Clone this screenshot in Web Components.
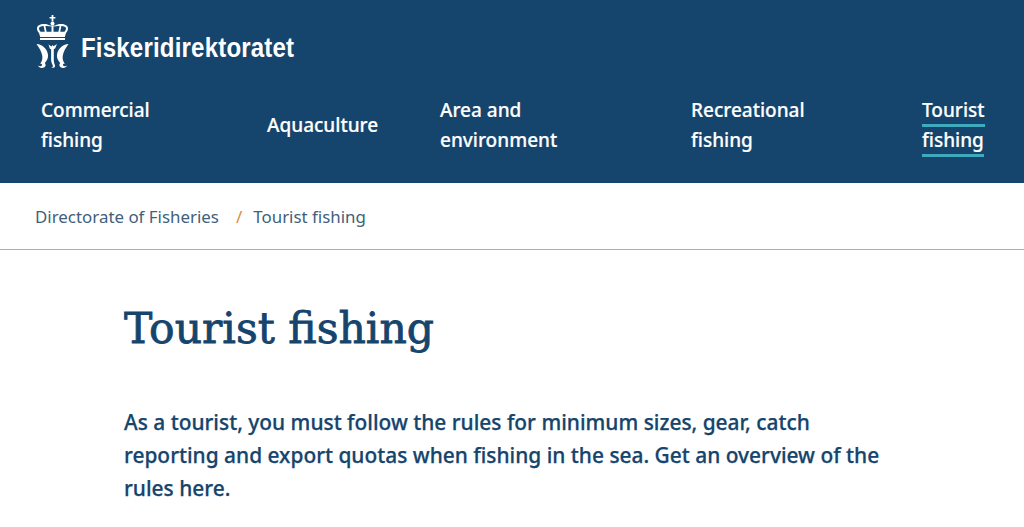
<!DOCTYPE html>
<html lang="en">
<head>
<meta charset="utf-8">
<title>Tourist fishing</title>
<style>
  html, body { margin: 0; height: 527px; overflow: hidden; background: #fff; }
  body { font-family: "Noto Sans", Roboto, sans-serif; color: #15446c; }
</style>
</head>
<body>
<site-header>
  <nav-item>Commercial<br>fishing</nav-item>
  <nav-item>Aquaculture</nav-item>
  <nav-item>Area and<br>environment</nav-item>
  <nav-item>Recreational<br>fishing</nav-item>
  <nav-item active><span>Tourist</span><br><span>fishing</span></nav-item>
</site-header>
<bread-crumbs>
  <span slot="first">Directorate of Fisheries</span>
  <span slot="second">Tourist fishing</span>
</bread-crumbs>
<page-intro heading="Tourist fishing">
  As a tourist, you must follow the rules for minimum sizes, gear, catch reporting and export quotas when fishing in the sea. Get an overview of the rules here.
</page-intro>

<script>
customElements.define(
  'site-logo',
  class extends HTMLElement {
    constructor() {
      super();
      this.attachShadow({ mode: 'open' }).innerHTML = `
        <style>
          :host { display: flex; align-items: flex-start; gap: 12px; color: #fff; height: 53px; }
          svg { display: block; flex: none; }
          .name {
            font: 700 27.500px/1 "Liberation Sans", sans-serif;
            margin-top: 19px;
            letter-spacing: 0.2px;
            transform: scaleX(0.875);
            transform-origin: left center;
            white-space: nowrap;
          }
        </style>
        <svg width="33" height="53" viewBox="0 0 33 53" fill="#fff" aria-hidden="true">
          <path d="M15.600 0h1.800v2h2v1.600h-2v3h-1.800v-3h-2V2h2z"/>
          <circle cx="16.500" cy="8.500" r="2"/>
          <path fill-rule="evenodd" d="M1 13.500c0-3 3-4.600 7-4.600 2.600 0 4.600.6 6 1.600h5c1.400-1 3.400-1.600 6-1.600 4 0 7 1.600 7 4.600 0 1.700-.8 3.200-2 4.500l-1.200 4H4.200L3 18c-1.200-1.300-2-2.800-2-4.500zM3 13.300c0 1.300.7 2.500 1.600 3.500h4.200L7.600 11c-2.700.2-4.600 1-4.600 2.300zM9.400 11.100l1.200 5.700h4.900v-5.200c-1.500-.3-3.500-.6-6.100-.5zM17.500 11.600v5.200h4.900l1.200-5.700c-2.600-.1-4.600.2-6.100.5zM25.400 11l-1.200 5.800h4.200c.9-1 1.600-2.200 1.600-3.500 0-1.300-1.900-2.100-4.600-2.300z"/>
          <rect x="4" y="23" width="25" height="2"/>
          <path d="M0.500 29c6 .4 11 5 11.500 11 .3 3.400-1.300 6-3.200 8 1.300 1.300 1.100 3.300-.8 4.400-2.300 1.100-5.300.3-6-1.900 1.300.9 3.300.9 3.900-.1.600-1.100-.4-2-1.700-1.600 1.800-2.600 2.500-5 2-8.200C5.600 36.800 3.300 33 .5 29z"/>
          <path d="M32.500 29c-6 .4-11 5-11.500 11-.3 3.400 1.300 6 3.200 8-1.300 1.300-1.100 3.300.8 4.400 2.300 1.100 5.300.3 6-1.900-1.300.9-3.300.9-3.900-.1-.6-1.100.4-2 1.700-1.600-1.800-2.600-2.500-5-2-8.200.6-3.800 2.900-7.600 5.700-11.600z"/>
          <path d="M12.500 29.500l3 2 1-1.500 1.100 1.300 3.400-2.300-1.900 4.400-1.300.6v11.500c0 3.200 1.700 4.500 1.100 6.200-.7 1.300-2.800 1.400-4.100.4 1.100.2 2-.1 2.100-.9.100-1.500-1.800-3-1.800-6.200V34.300l-1.200-.6z"/>
        </svg>
        <span class="name">Fiskeridirektoratet</span>
      `;
    }
  }
);

customElements.define(
  'nav-item',
  class extends HTMLElement {
    constructor() {
      super();
      this.attachShadow({ mode: 'open' }).innerHTML = `
        <style>
          :host { display: block; color: #fff; font-size: 19px; font-weight: 500; -webkit-text-stroke: 0.2px #fff; line-height: 30px; white-space: nowrap; }
          :host([active]) ::slotted(span) { border-bottom: 3px solid #3fa9bd; padding-bottom: 1px; }
        </style>
        <slot></slot>
      `;
    }
  }
);

customElements.define(
  'site-header',
  class extends HTMLElement {
    constructor() {
      super();
      this.attachShadow({ mode: 'open' }).innerHTML = `
        <style>
          :host { display: block; box-sizing: border-box; height: 183px; background: #15446c; padding: 15px 40px 0 36px; }
          nav {
            display: grid;
            grid-template-columns: 226px 173px 251px 231px auto;
            align-items: center;
            height: 60px;
            margin: 27px 0 0 5px;
          }
        </style>
        <site-logo></site-logo>
        <nav><slot></slot></nav>
      `;
    }
  }
);

customElements.define(
  'bread-crumbs',
  class extends HTMLElement {
    constructor() {
      super();
      this.attachShadow({ mode: 'open' }).innerHTML = `
        <style>
          :host { display: block; box-sizing: border-box; height: 67px; padding: 0 35px; border-bottom: 1px solid #9fb0bf; color: #3f5f7b; font-size: 16.900px; }
          div { display: flex; align-items: center; height: 66px; }
          i { font-style: normal; color: #e08a4a; margin: 0 11px 0 17px; }
        </style>
        <div><slot name="first"></slot><i>/</i><slot name="second"></slot></div>
      `;
    }
  }
);

customElements.define(
  'page-intro',
  class extends HTMLElement {
    constructor() {
      super();
      const heading = this.getAttribute('heading') || '';
      this.attachShadow({ mode: 'open' }).innerHTML = `
        <style>
          :host { display: block; padding: 48px 124px 0; color: #15446c; }
          h1 { margin: 0; font: 400 42.500px/62px "DejaVu Serif", serif; -webkit-text-stroke: 0.8px #15446c; }
          p { margin: 46px 0 0; max-width: 770px; font-size: 20.900px; font-weight: 500; -webkit-text-stroke: 0.25px #15446c; line-height: 33px; }
        </style>
        <h1>${heading}</h1>
        <p><slot></slot></p>
      `;
    }
  }
);
</script>
</body>
</html>
